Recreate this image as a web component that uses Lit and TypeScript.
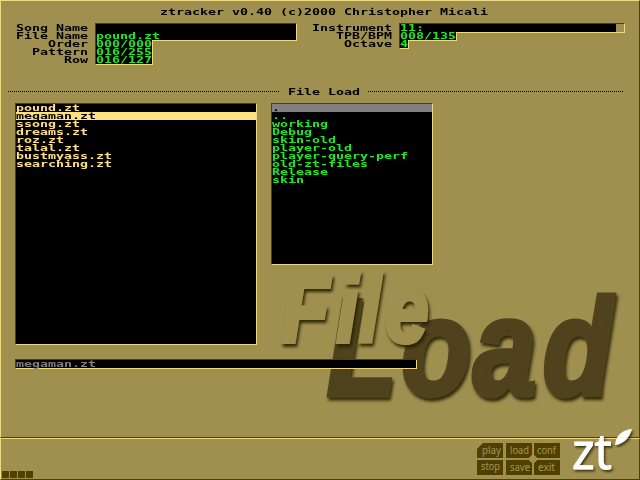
import { LitElement, html, svg, css } from "lit";
import { customElement, property } from "lit/decorators.js";

/** A run of text on the tracker's 8x8 character grid. */
@customElement("grid-text")
class GridText extends LitElement {
  @property() text = "";
  static styles = css`
    :host { display: block; height: 8px; }
    .run {
      display: block; width: max-content; height: 8px; margin-left: -0.3px;
      font: bold 9px/8px "DejaVu Sans Mono", monospace;
      white-space: pre; transform-origin: 0 0; transform: scaleX(1.4765);
    }
  `;
  render() {
    return html`<span class="run">${this.text}</span>`;
  }
}

@customElement("app-root")
class AppRoot extends LitElement {
  static styles = css`
    :host {
      display: block; position: relative; width: 640px; height: 480px; overflow: hidden;
      background: #a09050; color: #000;
      --hi: #f0d880; --lo: #504000; --green: #20e828; --cream: #ffe080;
    }
    * { box-sizing: border-box; }
    .art { position: absolute; left: 0; top: 0; }
    .screen { position: relative; height: 438px; border-top: 1px solid var(--hi); border-left: 1px solid var(--hi); border-bottom: 1px solid var(--lo); border-right: 1px solid var(--lo); padding: 7px 14px 0 7px; }
    .title { width: 328px; margin-left: 152px; }
    .info { display: grid; grid-template-columns: 297px 1fr; height: 40px; margin-top: 8px; }
    .row { display: flex; gap: 8px; height: 8px; }
    .label { display: flex; justify-content: flex-end; width: 80px; }
    .right .label { width: 87px; }
    .label grid-text { flex: none; }
    .field { height: 8px; background: #000; color: var(--green); box-shadow: 1px 0 var(--hi), 0 1px var(--hi), 1px 1px var(--hi), -1px 0 var(--lo); }
    .field.top { box-shadow: 1px 0 var(--hi), 0 1px var(--hi), 1px 1px var(--hi), -1px 0 var(--lo), 0 -1px var(--lo), -1px -1px var(--lo); }
    .w200 { width: 200px; } .w56 { width: 56px; } .w8 { width: 8px; }
    .inst { width: 224px; border-right: 8px solid #a09050; }
    .heading { display: flex; align-items: flex-start; margin-top: 24px; height: 8px; }
    .dots { height: 1px; margin-top: 3px; background: repeating-linear-gradient(90deg, #000 0 1px, transparent 1px 2px); }
    .dots.a { width: 271px; } .dots.b { width: 256px; }
    .heading grid-text { width: 72px; margin: 0 8px 0 9px; }
    .lists { display: flex; align-items: flex-start; gap: 16px; margin: 8px 0 0 8px; }
    .box { background: #000; border: 0; box-shadow: 1px 0 var(--hi), 0 1px var(--hi), 1px 1px var(--hi), -1px 0 var(--lo), 0 -1px var(--lo), -1px -1px var(--lo); }
    .files { width: 240px; height: 240px; color: var(--cream); }
    .dirs { width: 160px; height: 160px; color: var(--green); }
    .files .sel { background: var(--cream); color: #000; }
    .dirs .sel { background: #808080; color: #000; }
    .name { width: 400px; margin: 16px 0 0 8px; color: #808080; }
    .footer { position: relative; display: flex; align-items: flex-end; height: 42px; border-top: 1px solid var(--hi); border-left: 1px solid var(--hi); border-right: 1px solid var(--lo); border-bottom: 1px solid var(--lo); }
    .leds { display: flex; gap: 1px; margin: 0 0 1px 1px; }
    .leds i { width: 7px; height: 7px; background: var(--lo); }
  `;

  private label(text: string) {
    return html`<div class="label"><grid-text style="width:${text.length * 8}px" .text=${text}></grid-text></div>`;
  }

  private row(label: string, value: string, kind: string) {
    return html`<div class="row">${this.label(label)}<div class="field ${kind}"><grid-text .text=${value}></grid-text></div></div>`;
  }

  private list(items: string[], selected: number) {
    return items.map((t, i) => html`<grid-text class=${i === selected ? "sel" : ""} .text=${t}></grid-text>`);
  }

  private button(d: string, x: number, y: number, length: number, text: string) {
    return svg`<path d=${d} fill="#504000"/>
      <text x=${x} y=${y} textLength=${length} lengthAdjust="spacingAndGlyphs" font-family="Noto Sans, sans-serif" font-size="11" fill="#a09050" stroke="#a09050" stroke-width=".1">${text}</text>`;
  }

  render() {
    return html`
      <svg class="art" width="640" height="480" viewBox="0 0 640 480">
        <defs>
          <filter id="shade" x="-10%" y="-10%" width="125%" height="130%">
            <feDropShadow dx="2" dy="3" stdDeviation="1.8" flood-color="#241b04" flood-opacity=".9"/>
          </filter>
        </defs>
        <g font-family="Liberation Sans, sans-serif" font-weight="bold" font-style="italic" stroke-linejoin="miter">
          <g filter="url(#shade)" transform="translate(327 395) scale(.83 1)" font-size="137" fill="#4f421f" stroke="#4f421f" stroke-width="5">
            <text x="0 89.5 176 260" y="0">Load</text>
          </g>
          <g filter="url(#shade)" transform="translate(279 342) scale(.83 1)" font-size="94" fill="#a09050" stroke="#a09050" stroke-width="4">
            <text x="3 69 96 128" y="0">File</text>
          </g>
        </g>
      </svg>
      <main class="screen">
        <grid-text class="title" .text=${"ztracker v0.40 (c)2000 Christopher Micali"}></grid-text>
        <section class="info">
          <div class="left">
            ${this.row("Song Name", "", "w200 top")}
            ${this.row("File Name", "pound.zt", "w200")}
            ${this.row("Order", "000/000", "w56")}
            ${this.row("Pattern", "016/255", "w56")}
            ${this.row("Row", "016/127", "w56")}
          </div>
          <div class="right">
            ${this.row("Instrument", "11:", "inst top")}
            ${this.row("TPB/BPM", "008/135", "w56")}
            ${this.row("Octave", "4", "w8")}
          </div>
        </section>
        <div class="heading"><div class="dots a"></div><grid-text .text=${"File Load"}></grid-text><div class="dots b"></div></div>
        <section class="lists">
          <div class="box files">${this.list(["pound.zt", "megaman.zt", "ssong.zt", "dreams.zt", "roz.zt", "talal.zt", "bustmyass.zt", "searching.zt"], 1)}</div>
          <div class="box dirs">${this.list([".", "..", "working", "Debug", "skin-old", "player-old", "player-query-perf", "old-zt-files", "Release", "skin"], 0)}</div>
        </section>
        <div class="box name"><grid-text .text=${"megaman.zt"}></grid-text></div>
      </main>
      <footer class="footer"><div class="leds"><i></i><i></i><i></i><i></i></div></footer>
      <svg class="art" width="640" height="480" viewBox="0 0 640 480">
        <defs>
          <filter id="drop" x="-20%" y="-20%" width="150%" height="150%">
            <feDropShadow dx="1.5" dy="2" stdDeviation="1" flood-color="#2c2200" flood-opacity=".8"/>
          </filter>
        </defs>
        ${this.button("M483 443H503V458H477V449Z", 482, 454, 19, "play")}
        ${this.button("M506 443H532V455L529 458H506Z", 510, 454, 19, "load")}
        ${this.button("M534 443H560V458H537L534 455Z", 537, 454, 19, "conf")}
        ${this.button("M477 460H503V475H477Z", 481, 470, 19, "stop")}
        ${this.button("M506 460H529L532 463V475H506Z", 510, 471, 20, "save")}
        ${this.button("M537 460H560V475H534V463Z", 538, 471, 17, "exit")}
        <path d="M533 454L538 459L533 464L528 459Z" fill="#a09050"/>
        <g filter="url(#drop)" fill="#fff">
          <text x="572" y="469" font-family="Noto Sans, sans-serif" font-size="50" font-weight="400" stroke="#fff" stroke-width=".8" textLength="40" lengthAdjust="spacingAndGlyphs">zt</text>
          <path d="M615 445C616 436 621 430 632 429C629 438 624 444 615 445Z"/>
        </g>
      </svg>`;
  }
}
